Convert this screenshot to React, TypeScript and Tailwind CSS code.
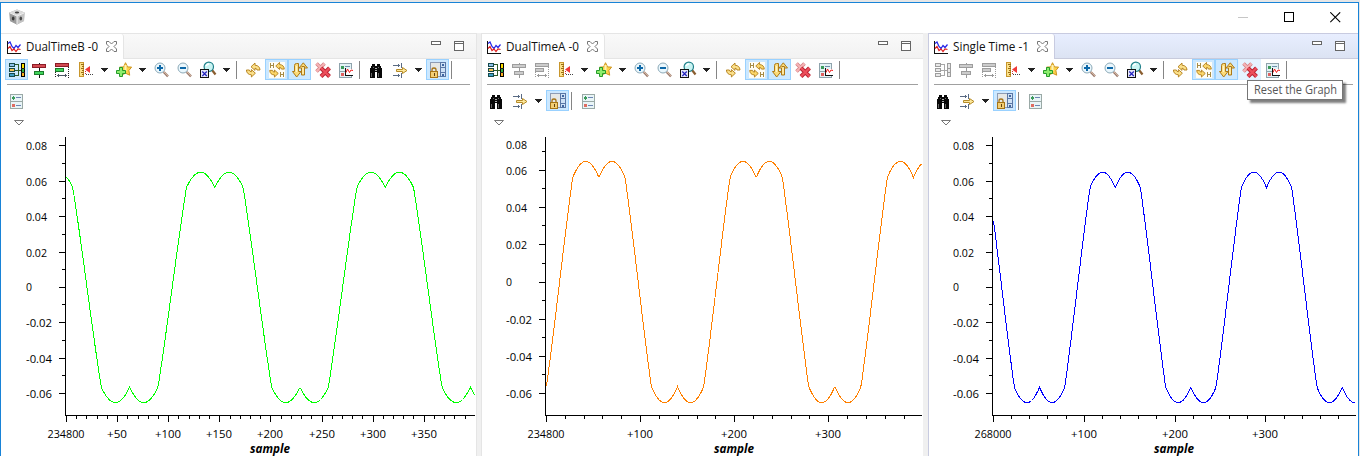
import type { ReactNode } from "react"

type PlotData = {
  left: number
  width: number
  axis: number
  end: number
  labelX: number
  color: string
  notch: number
  period: number
  mid: number
  amp: number
  yLabels: number[]
  yStep: number
  xStep: number
  xMinor: number
  xLabels: string[]
  captionX: number
}

const yText = ["0.08", "0.06", "0.04", "0.02", "0", "-0.02", "-0.04", "-0.06"]

const plotB: PlotData = {
  left: 1, width: 475, axis: 65, end: 475, labelX: 26, color: "#00ff00",
  notch: 214.8, period: 170.4, mid: 287.4, amp: 115.2,
  yLabels: [145, 181, 216, 252, 287, 322, 358, 393], yStep: 35.43,
  xStep: 51.1, xMinor: 5,
  xLabels: ["234800", "+50", "+100", "+150", "+200", "+250", "+300", "+350"],
  captionX: 250,
}

const plotA: PlotData = {
  left: 482, width: 441, axis: 545, end: 922, labelX: 506, color: "#ff8000",
  notch: 598.9, period: 157.3, mid: 282, amp: 120.6,
  yLabels: [144, 170, 207, 244, 282, 319, 356, 393], yStep: 37.1,
  xStep: 94.1, xMinor: 5,
  xLabels: ["234800", "+100", "+200", "+300"],
  captionX: 714,
}

const plotS: PlotData = {
  left: 929, width: 429, axis: 992, end: 1356, labelX: 953, color: "#0000ff",
  notch: 1115.2, period: 151.3, mid: 287.4, amp: 115.2,
  yLabels: [145, 181, 216, 252, 287, 322, 358, 393], yStep: 35.43,
  xStep: 90.8, xMinor: 5,
  xLabels: ["268000", "+100", "+200", "+300"],
  captionX: 1154,
}

// space vector modulated phase voltage, normalised to a peak of 1
function svm(deg: number) {
  let t = ((deg % 360) + 360) % 360
  const sign = t >= 180 ? -1 : 1
  t = t % 180
  if (t > 90) t = 180 - t
  const rad = Math.PI / 180
  return sign * (t < 30 ? Math.sqrt(3) * Math.sin(t * rad) : Math.sin((t + 30) * rad))
}

function wave(p: PlotData) {
  const pts: string[] = []
  for (let x = p.axis + 1; x < p.end; x++) {
    const v = svm(90 + ((x + 0.5 - p.notch) / p.period) * 360)
    pts.push(`${x + 0.5},${(p.mid - p.amp * v).toFixed(1)}`)
  }
  return pts.join(" ")
}

function Plot({ p }: { p: PlotData }) {
  const span = p.end - p.axis
  const minor = p.xStep / p.xMinor
  const xTicks = Array.from({ length: Math.floor(span / minor) + 1 }, (_, i) => i).filter((i) => i * minor < span - 3)
  const noTop = p.yLabels[0] === 144
  return (
    <svg className="block" width={p.width} height="325" viewBox={`${p.left} 131 ${p.width} 325`}>
      <g fill="#000" shapeRendering="crispEdges">
        <rect x={p.axis} y="137" width="1" height="278" />
        <rect x={p.axis} y="415" width={p.end - p.axis} height="1" />
        {p.yLabels.map((y, i) => (
          <g key={y}>
            {!(noTop && i === 0) && <rect x={p.axis - 6} y={y} width="6" height="1" />}
            {i < 7 && <rect x={p.axis - 3} y={Math.round(p.yLabels[i + 1] - p.yStep / 2)} width="3" height="1" />}
          </g>
        ))}
        {xTicks.map((i) => (
          <rect key={i} x={Math.round(p.axis + 1 + i * minor)} y="416" width="1" height={i % p.xMinor === 0 ? 6 : 3} />
        ))}
      </g>
      <polyline points={wave(p)} fill="none" stroke={p.color} strokeWidth="1" shapeRendering="crispEdges" />
      <g className="font-['Open_Sans',sans-serif] text-[11.5px]" fill="#000">
        {p.yLabels.map((y, i) => (
          <text key={y} x={p.labelX} y={i === 4 ? y + 4 : y + 4.600} textLength={[21, 21, 21, 21, 6, 26, 26, 26][i]} lengthAdjust="spacingAndGlyphs">
            {yText[i]}
          </text>
        ))}
        {p.xLabels.map((t, i) => {
          const w = i === 0 ? 37 : t.length === 3 ? 20 : 26
          return (
            <text key={t} x={Math.round(p.axis + 1 + i * p.xStep) - w / 2} y="438" textLength={w} lengthAdjust="spacingAndGlyphs">
              {t}
            </text>
          )
        })}
        <text className="text-[12px] font-bold italic" fill="#000" x={p.captionX} y="453" textLength="40" lengthAdjust="spacingAndGlyphs">
          sample
        </text>
      </g>
    </svg>
  )
}

function Icon({ dx = 0, children }: { dx?: number; children: ReactNode }) {
  return (
    <svg className="block h-4 w-4 shrink-0 overflow-visible" viewBox={`${-dx} 0 16 16`}>
      {children}
    </svg>
  )
}

function TreeIcon({ off, dx }: { off?: boolean; dx?: number }) {
  const line = off ? "#9d9d9d" : "#174a4a"
  return (
    <Icon dx={dx}>
      <g shapeRendering="crispEdges">
        <path d="M6 2.5h3.500M6 8.500h7M6 13.500h3.500M9.500 2v12" fill="none" stroke={off ? "#a8a8a8" : "#2f5a2a"} />
        <rect x="0.500" y="1.500" width="5" height="3" fill={off ? "#e8e8e8" : "#8fc0ec"} stroke={line} />
        <rect x="0.500" y="6.500" width="5" height="3" fill={off ? "#e8e8e8" : "#f6c050"} stroke={line} />
        <rect x="0.500" y="11.500" width="5" height="3" fill={off ? "#e8e8e8" : "#3fa0c8"} stroke={line} />
        <rect x="12.500" y="1.500" width="3" height="13" fill={off ? "#e8e8e8" : "#2fb040"} stroke={off ? line : "#000"} />
        {!off && <rect x="13" y="2" width="2" height="4" fill="#ffe000" />}
        {!off && <rect x="13" y="10" width="2" height="4" fill="#ffb020" />}
        <path d="M12 6.500h4M12 10.500h4" stroke={off ? line : "#222"} />
      </g>
    </Icon>
  )
}

function CenterIcon({ off }: { off?: boolean }) {
  return (
    <Icon>
      <g shapeRendering="crispEdges">
        <rect x="7" y="1" width="1" height="15" fill={off ? "#999" : "#111"} />
        <rect x="0.500" y="2.500" width="13" height="3" fill={off ? "#ccc" : "#d34a52"} stroke={off ? "#9d9d9d" : "#8c1c26"} />
        <rect x="2.500" y="9.500" width="9" height="3" fill={off ? "#ccc" : "#3fd45a"} stroke={off ? "#9d9d9d" : "#1b7a2c"} />
      </g>
    </Icon>
  )
}

function WidthIcon({ off }: { off?: boolean }) {
  const ink = off ? "#999" : "#222"
  return (
    <Icon>
      <g shapeRendering="crispEdges">
        <rect x="0.500" y="1.500" width="13" height="3" fill={off ? "#ccc" : "#d34a52"} stroke={off ? "#9d9d9d" : "#8c1c26"} />
        <rect x="0.500" y="6.500" width="8" height="3" fill={off ? "#ccc" : "#3fd45a"} stroke={off ? "#9d9d9d" : "#1b7a2c"} />
        <path d="M0.500 10v6M13.500 5v11" stroke={ink} strokeDasharray="1 1" />
        <path d="M2 13.500h10M3.500 12v3M10.500 12v3" stroke={off ? "#999" : "#4b5563"} />
      </g>
    </Icon>
  )
}

function RulerIcon() {
  return (
    <Icon>
      <g shapeRendering="crispEdges">
        <rect x="1.500" y="0.500" width="4" height="14" fill="#fbe28a" stroke="#c8962c" />
        <path d="M3 2.500h3M4 4.500h2M3 6.500h3M4 8.500h2M3 10.500h3M4 12.500h2" stroke="#9a6b14" />
        <path d="M7.500 9v4" stroke="#d23030" strokeDasharray="1 1" />
        <path d="M8 12.500h7" stroke="#444" strokeDasharray="1 1" />
      </g>
      <path d="M7 7.500 12 4v7z" fill="#f03a3a" />
    </Icon>
  )
}

function StarIcon() {
  return (
    <Icon>
      <path d="M9.500.7 11.600 4.900 15.600 5.100 12.900 8.500 13.700 13.200 9.500 11.200 5.500 13.200 6.300 8.500 3.600 5.100 7.600 4.900z" fill="#fbd24a" stroke="#cf9420" />
      <path d="M9.500 3v6" stroke="#fff2b5" strokeWidth="2" />
      <path d="M3.500 5.500h3v3h3v3h-3v3h-3v-3h-3v-3h3z" fill="#8ded6d" stroke="#259c2a" />
    </Icon>
  )
}

function ZoomIcon({ plus }: { plus?: boolean }) {
  return (
    <Icon>
      <path d="M9.700 10 14 14.300" stroke="#9a7a6d" strokeWidth="2.400" />
      <path d="M9.700 9.500 14 13.800" stroke="#dfc2aa" strokeWidth="1" />
      <circle cx="6" cy="6" r="5" fill="#eaf7fd" stroke="#8daab8" />
      <path d="M3 6h6" stroke="#0d68a8" strokeWidth="2" />
      {plus && <path d="M6 3v6" stroke="#0d68a8" strokeWidth="2" />}
    </Icon>
  )
}

function ZoomFitIcon() {
  return (
    <Icon>
      <path d="M12 8 15.500 12.500" stroke="#8a5e30" strokeWidth="2.200" />
      <circle cx="8.800" cy="4.800" r="4.700" fill="#c9f4f3" stroke="#20808a" strokeWidth="1.200" />
      <path d="M6 4q1-2 3-2" stroke="#fff" strokeWidth="1.500" fill="none" />
      <g shapeRendering="crispEdges">
        <rect x="0.500" y="7.500" width="8" height="8" fill="#e6e8f8" stroke="#111" />
      </g>
      <path d="m2.300 9.500 4.500 4.500m0-4.500-4.500 4.500" stroke="#2424c0" strokeWidth="1.200" />
    </Icon>
  )
}

const arrow = "M5 4.800 9 1v2.200q4.700.3 5 4.800h-3q-.3-1.800-2-1.800v2.200z"

function RefreshIcon() {
  return (
    <Icon>
      <g fill="#fbe08a" stroke="#b27d15" strokeWidth="0.900">
        <path d={arrow} />
        <path d={arrow} transform="rotate(180 7.200 8)" />
      </g>
    </Icon>
  )
}

function RefreshHIcon() {
  return (
    <Icon>
      <rect width="16" height="16" fill="#fffdf4" />
      <g fill="#fbd76a" stroke="#ad7917" strokeWidth="0.900">
        <path d={arrow} transform="translate(2 -0.500) scale(0.950)" />
        <path d={arrow} transform="translate(14 16) rotate(180) scale(0.950)" />
      </g>
      <path d="M1.500 1v5M4.500 1v5M1 3.500h4M11.500 10v5M14.500 10v5M11 12.500h4" stroke="#a68b45" fill="none" shapeRendering="crispEdges" />
    </Icon>
  )
}

function RefreshPauseIcon() {
  return (
    <Icon>
      <g fill="#fbdb7a" stroke="#ad7917">
        <path d="M2.500 3.500q0-2 2-2h2v8h2.500L4.700 15 .5 9.500h2z" />
        <path d="M9.500 4.500h3V6h3L11.300.8 7 6h2.500v7h3V6" />
      </g>
      <path d="M10.500 6h1v6h-1zM3.700 4h1.500v6H3.700z" fill="#fff3c4" />
    </Icon>
  )
}

function ResetIcon() {
  return (
    <Icon>
      <path d="m1.500 1.500 8 8m0-8-8 8" stroke="#d78084" strokeWidth="3.600" />
      <path d="m1.500 1.500 8 8m0-8-8 8" stroke="#f5b4b6" strokeWidth="2" />
      <path d="m6 6 8.500 8.500m0-8.500L6 14.500" stroke="#b81f2e" strokeWidth="4" />
      <path d="m6 6 8.500 8.500m0-8.500L6 14.500" stroke="#ec4f5b" strokeWidth="2.400" />
    </Icon>
  )
}

function PropsChartIcon() {
  return (
    <Icon>
      <g shapeRendering="crispEdges">
        <rect x="1.500" y="1.500" width="12" height="14" fill="#e3f2f5" stroke="#8fa3ac" />
        <rect x="3" y="4" width="3" height="3" fill="#3c9b5c" />
        <path d="M7 4.500h5" stroke="#6d8fae" />
        <path d="M1 9.500h7" stroke="#8fa3ac" />
        <rect x="3" y="11" width="3" height="3" fill="#e06060" />
        <rect x="8" y="7" width="7" height="6" fill="#fff" />
        <path d="M7.500 6v8M7 13.500h8" stroke="#111" />
      </g>
      <path d="M8 10.500 9.500 7 11.500 10.500 13 8 15 8.500" fill="none" stroke="#f01818" />
    </Icon>
  )
}

function PropsIcon() {
  return (
    <Icon>
      <g shapeRendering="crispEdges">
        <rect x="1.500" y="1.500" width="12" height="14" fill="#e9f5f7" stroke="#9aa9a6" />
        <path d="M1 8.500h13" stroke="#9aa9a6" />
        <rect x="3" y="4" width="3" height="2" fill="#3c9b5c" />
        <rect x="4" y="3" width="1" height="4" fill="#3c9b5c" />
        <rect x="3" y="11" width="3" height="3" fill="#df6d62" />
        <path d="M7 4.500h5M7 12.500h5" stroke="#6d86b4" />
      </g>
    </Icon>
  )
}

function BinocularsIcon() {
  return (
    <Icon dx={-1}>
      <g shapeRendering="crispEdges" fill="#080808">
        <path d="M4 2h3v2H4zM9 2h3v2H9zM3 4h10v2H3zM2 6h12v4H2zM2 10h5v6H2zM9 10h5v6H9z" />
        <path d="M3 11h1v4H3zM10 11h1v4h-1zM5 5h1v1H5zM10 5h1v1h-1z" fill="#666" />
        <path d="M7 6h2v1H7zM7 8h2v1H7z" fill="#aaa" />
      </g>
    </Icon>
  )
}

function FilterIcon() {
  return (
    <Icon>
      <g shapeRendering="crispEdges" fill="none" stroke="#596a83">
        <path d="M1 3.500h7M9.500 1v5M1 13.500h7M9.500 11v5M6.500 2v3M6.500 12v3" />
      </g>
      <path d="M4.500 7.500h6v-2L15 8.500l-4.500 3v-2h-6z" fill="#fce79a" stroke="#b58a28" />
    </Icon>
  )
}

function LockIcon() {
  return (
    <Icon>
      <g shapeRendering="crispEdges">
        <rect x="0.500" y="0.500" width="15" height="14" fill="#e6e8e6" stroke="#8e9cb4" />
        <rect x="10.500" y="0.500" width="5" height="14" fill="#cfe2f6" stroke="#5a77a6" />
        <path d="M10 5.500h6M10 10.500h6" stroke="#5a77a6" />
        <path d="M12 2h2v2h-2zM12 12h2v2h-2z" fill="#3f66a0" />
        <rect x="0.500" y="9.500" width="7" height="6" fill="#f3ce74" stroke="#a67416" />
        <rect x="4" y="11" width="1" height="3" fill="#604010" />
      </g>
      <path d="M2 9V7.800Q2 6 4 6t2 1.800V9" fill="none" stroke="#a67416" strokeWidth="1.300" />
    </Icon>
  )
}

function Btn({ on, hover, children }: { on?: boolean; hover?: boolean; children: ReactNode }) {
  const look = on ? "border-[#99d1ff] bg-[#cce8ff]" : hover ? "border-[#e0f0ff] bg-[#e5f3ff]" : "border-transparent"
  return <div className={`h-[21px] w-[23px] shrink-0 border pt-0.5 pl-[3px] ${look}`}>{children}</div>
}

function Drop() {
  return (
    <div className="w-[15px] shrink-0 pt-[9px] pl-1">
      <svg className="block h-1 w-[7px]" viewBox="0 0 7 4" shapeRendering="crispEdges">
        <path d="M0 0h7v1H0zM1 1h5v1H1zM2 2h3v1H2zM3 3h1v1H3z" fill="#222" />
      </svg>
    </div>
  )
}

function Sep() {
  return <div className="mt-0.5 mr-[5px] ml-0.5 h-[18px] w-px shrink-0 bg-[#858585]" />
}

function FindTools() {
  return (
    <>
      <Btn><BinocularsIcon /></Btn>
      <Btn><FilterIcon /></Btn>
      <Drop />
      <Btn on><LockIcon /></Btn>
      <Sep />
    </>
  )
}

type PanelProps = {
  title: string
  titleWidth: string
  tabWidth: string
  active?: boolean
  wide?: boolean
  sync?: boolean
  align?: boolean
  resetHover?: boolean
  plot: PlotData
  className: string
}

function Panel({ title, titleWidth, tabWidth, active, wide, sync, align, resetHover, plot, className }: PanelProps) {
  return (
    <section className={`h-[423px] shrink-0 overflow-hidden bg-white ${className}`}>
      <header
        className={`flex h-[26px] border-t border-b bg-linear-to-b ${
          active ? "border-t-[#c8cbe0] border-b-[#c8cbdc] from-[#e8eeff] to-[#dce3f3]" : "border-[#e5e5e5] from-[#f9f9f9] to-[#f2f2f2]"
        }`}
      >
        <div
          className={`flex h-[25px] shrink-0 items-center rounded-tr-[3px] border-r bg-white ${active ? "border-[#c8cbe0]" : "border-[#e5e5e5]"} ${
            wide ? "pl-1.5" : "pl-[5px]"
          } ${tabWidth}`}
        >
          <svg className="mt-px block h-[13px] w-[15px] shrink-0" viewBox="0 0 15 13">
            <path d="M.5 0v12.500H14" fill="none" stroke="#111" shapeRendering="crispEdges" />
            <path d="M1 2.500 3 1 5 5.500 7 7.500 9 4.500 11 6.500 13.500 3.500" fill="none" stroke="#2222e8" strokeWidth="1.200" />
            <path d="M1 7.500 3 5.500 5 9.500 7 8 9 10.500 11 8 13.500 8.500" fill="none" stroke="#e01c1c" strokeWidth="1.200" />
          </svg>
          <svg className="ml-1 block h-5 shrink-0 overflow-visible font-['Open_Sans',sans-serif] text-[12px]" width={titleWidth} height="20">
            <text x="0" y="14" fill="#111" textLength={titleWidth} lengthAdjust="spacingAndGlyphs">{title}</text>
          </svg>
          <svg className="ml-2 block h-[11px] w-[11px] shrink-0" viewBox="0 0 11 11">
            <path d="M.5.5h2.500L5.500 3 8 .5h2.500V3L8 5.500 10.500 8v2.500H8L5.500 8 3 10.500H.5V8L3 5.500.5 3z" fill="#fff" stroke="#777" />
          </svg>
        </div>
        <div className={`flex grow justify-end gap-[13px] pt-[7px] ${active ? "pr-[13px]" : "pr-3"}`}>
          <div className="h-1 w-[10px] border border-[#666] bg-white" />
          <div className="h-[10px] w-[10px] border border-[#666] bg-white">
            <div className="mt-px h-px bg-[#666]" />
          </div>
        </div>
      </header>
      <div className={`flex h-[25px] ${wide ? "pl-1" : "pl-[3px]"}`}>
        <Btn on={wide}><TreeIcon off={!sync} dx={wide ? 0 : -1} /></Btn>
        <Btn><CenterIcon off={!align} /></Btn>
        <Btn><WidthIcon off={!align} /></Btn>
        <Btn><RulerIcon /></Btn>
        <Drop />
        <Btn><StarIcon /></Btn>
        <Drop />
        <Btn><ZoomIcon plus /></Btn>
        <Btn><ZoomIcon /></Btn>
        <Btn><ZoomFitIcon /></Btn>
        <Drop />
        <Sep />
        <Btn><RefreshIcon /></Btn>
        <Btn on><RefreshHIcon /></Btn>
        <Btn on><RefreshPauseIcon /></Btn>
        <Btn hover={resetHover}><ResetIcon /></Btn>
        <Btn><PropsChartIcon /></Btn>
        <Sep />
        {wide && <FindTools />}
      </div>
      <div className={`h-px bg-[#a0a0a0] ${wide ? "mx-[6px]" : "mx-[5px]"}`} />
      <div className={`mt-[5px] flex h-[21px] ${wide ? "pl-1" : "pl-[3px]"}`}>
        {!wide && <FindTools />}
        <Btn><PropsIcon /></Btn>
      </div>
      <svg className={`mt-[9px] block h-[11px] w-[10px] ${wide ? "ml-[13px]" : "ml-3"}`} viewBox="0 0 10 11">
        <path d="M.5.5h9L5 5z" fill="#fff" stroke="#777" />
      </svg>
      <Plot p={plot} />
    </section>
  )
}

export default function App() {
  return (
    <div className="relative h-[456px] w-[1360px] overflow-hidden bg-[#e6e6e6] pt-0.5 font-['Open_Sans',sans-serif]">
      <div className="h-[454px] w-[1359px] border-t border-r border-l border-[#1883d7] bg-[#f0f0f0]">
        <div className="flex h-[30px] items-start bg-white pl-2">
          <svg className="mt-1.5 block h-4 w-4" viewBox="0 0 16 16">
            <path d="M8 .5 15.500 3.500 15 12 8 15.500 1 12 .5 3.500z" fill="#aaa" />
            <path d="M8 .5 15.500 3.500 8 7 .5 3.500z" fill="#dcdcdc" />
            <path d="M.5 3.500 8 7v8.500L1 12z" fill="#9b9b9b" />
            <path d="M8 7 15.500 3.500 15 12 8 15.500z" fill="#c4c4c4" />
            <ellipse cx="8" cy="3.500" rx="2.200" ry="1" fill="#444" />
            <ellipse cx="4.200" cy="9.500" rx="1.300" ry="1.900" fill="#3a3a3a" />
            <ellipse cx="11.800" cy="9.500" rx="1.300" ry="1.900" fill="#4a4a4a" />
            <path d="M8 7v8M1 4l7 3 7-3" stroke="#f2f2f2" fill="none" />
          </svg>
          <div className="mr-[17px] ml-auto flex gap-[35px] pt-[9px]">
            <svg className="block h-[11px] w-[11px]" viewBox="0 0 11 11">
              <path d="M0 5.500h10" stroke="#c6c6c6" shapeRendering="crispEdges" />
            </svg>
            <svg className="block h-[11px] w-[11px]" viewBox="0 0 11 11">
              <path d="M.5.500h9v9h-9z" fill="none" stroke="#000" shapeRendering="crispEdges" />
            </svg>
            <svg className="block h-[11px] w-[11px]" viewBox="0 0 11 11">
              <path d="m.3.300 9.900 9.900m0-9.900L.3 10.200" stroke="#000" strokeWidth="1.100" />
            </svg>
          </div>
        </div>
        <div className="flex">
          <Panel title="DualTimeB -0" titleWidth="72" tabWidth="w-[123px]" wide sync align plot={plotB} className="w-[475px]" />
          <div className="h-[423px] w-[6px] shrink-0 border-r border-l border-[#e5e5e5] bg-[#f0f0f0]" />
          <Panel title="DualTimeA -0" titleWidth="73" tabWidth="w-[123px]" sync plot={plotA} className="w-[441px]" />
          <div className="h-[423px] w-[6px] shrink-0 border-r border-[#c8cbe0] bg-[#f0f0f0]" />
          <Panel title="Single Time -1" titleWidth="76" tabWidth="w-[126px]" active resetHover plot={plotS} className="w-[429px]" />
        </div>
      </div>
      <div className="absolute top-[80px] left-[1247px] flex h-5 w-24 items-center justify-center border border-[#767676] bg-white shadow-[3px_3px_2px_rgba(0,0,0,0.5)]">
        <svg className="block h-[18px] w-[83px] overflow-visible text-[12px]">
          <text x="0" y="13" fill="#575757" textLength="83" lengthAdjust="spacingAndGlyphs">Reset the Graph</text>
        </svg>
      </div>
    </div>
  )
}
